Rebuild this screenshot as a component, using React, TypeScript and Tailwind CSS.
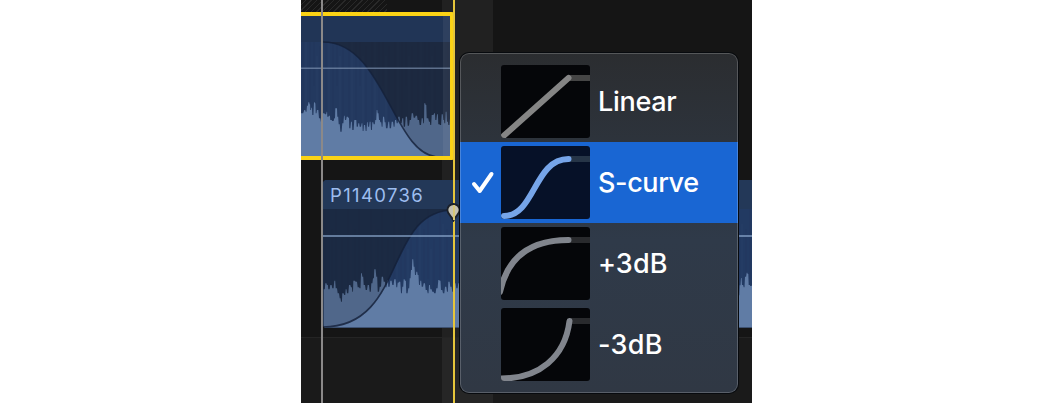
import React from "react";

const upperWave =
  "0,85 10,75 14,80 18,62 22,52 26,58 28,75 31,68 34,90 39,52 42,55 44,85 48,75 54,100 60,112 66,85 72,88 77,80 79,95 84,92 88,105 94,108 100,100 103,70 106,70 109,95 113,118 118,140 124,115 129,92 132,105 137,95 142,98 145,130 150,110 154,135 160,105 164,105 167,125 172,115 176,125 182,115 185,138 189,120 194,138 198,112 201,125 206,110 210,135 214,112 218,118 223,105 227,75 230,85 234,105 238,112 242,125 246,95 251,112 255,130 262,110 266,130 272,110 278,125 282,105 287,115 292,95 298,115 304,100 308,125 314,95 320,122 326,105 332,85 338,98 344,92 350,105 356,120 362,100 367,115 370,55 374,60 377,100 384,110 388,120 392,90 400,85 403,105 408,88 412,118 417,120 422,88 427,105 430,115 434,80 438,110 442,120 447,100 456,105";
const lowerWave =
  "2,118 7,100 12,105 16,118 22,105 28,115 34,92 38,115 44,130 50,145 54,155 58,130 64,135 68,118 72,130 78,105 84,112 88,125 91,92 98,95 104,112 110,115 114,70 118,80 122,105 128,120 134,105 140,125 145,100 150,85 154,58 160,80 164,125 170,110 176,80 182,95 188,112 192,90 196,110 202,92 208,105 214,88 220,112 224,98 228,95 234,130 238,110 242,88 246,92 250,130 256,115 260,85 264,60 268,28 272,50 276,75 280,65 284,75 288,105 292,92 296,110 302,100 308,120 314,130 318,105 322,118 328,125 334,130 340,115 346,90 350,92 354,120 360,130 366,110 372,125 376,95 382,110 388,125 394,100 400,115 406,100 1240,105 1247,136 1250,106 1254,84 1257,105 1262,112 1266,80 1271,68 1274,72 1277,105 1282,108 1287,106";

// Each sample reads as a narrow vertical bar.
function steps(samples: string, dx: number, dy: number, base: number) {
  const pts = samples.split(" ").map((p) => p.split(",").map(Number));
  let d = `M${dx + pts[0][0] / 3} ${base}`;
  pts.forEach(([x, y], i) => {
    const px = dx + x / 3;
    const next = i + 1 < pts.length ? dx + pts[i + 1][0] / 3 : px + 2;
    d += ` L${px.toFixed(1)} ${(dy + y / 3).toFixed(1)} L${(px + (next - px) * 0.65).toFixed(1)} ${(dy + y / 3).toFixed(1)}`;
    if (i + 1 === pts.length) d += ` L${next} ${base}`;
  });
  return d + "Z";
}

function Streaks({ id }: { id: string }) {
  return (
    <pattern id={id} width="23" height="150" patternUnits="userSpaceOnUse">
      <path d="M2 0V150M9 20V150M13 0V70M19 30V150" stroke="#17294a" strokeOpacity=".2" strokeWidth="1" />
      <path d="M5 15V150M16 40V150" stroke="#30507f" strokeOpacity=".14" strokeWidth="1" />
    </pattern>
  );
}

function UpperClip() {
  return (
    <div className="h-[148px] w-[153px] shrink-0 rounded-r-[3px] border-y-[4px] border-r-[4px] border-[#fbd315] bg-[#23395f]">
      <svg className="block h-[140px] w-[149px]" viewBox="0 0 149 140">
        <defs><Streaks id="streak-a" /></defs>
        <rect width="149" height="26" fill="#213556" />
        <rect y="26" width="149" height="114" fill="url(#streak-a)" />
        <path d="M22 26C84 26 92 141 138 141H149V26Z" fill="#19202d" fillOpacity=".5" />
        <path d={steps(upperWave, 0, 69, 141)} fill="#607ca5" />
        <path d="M22 26C84 26 92 141 138 141H149V26Z" fill="#19202d" fillOpacity=".22" />
        <path d="M22 26C84 26 92 141 138 141" fill="none" stroke="#14213a" strokeOpacity=".8" strokeWidth="1.6" />
        <path d="M0 52.3H149" stroke="#8396b5" strokeOpacity=".65" strokeWidth="1.6" />
        <path d="M142 0H149V141H142Z" fill="white" fillOpacity=".06" />
      </svg>
    </div>
  );
}

function LowerClip() {
  return (
    <div className="relative ml-[22px] flex h-[148px] flex-col overflow-hidden rounded-l-[4px] bg-[#223a62]">
      <div className="flex h-[29px] items-center bg-[#233858] pl-[7px] font-['Inter',sans-serif] text-[18.5px] leading-none tracking-[1.35px] text-[#9dbdef]">
        <span className="relative top-px">P1140736</span>
      </div>
      <svg className="block h-[119px] w-[429px]" viewBox="0 0 429 119">
        <defs><Streaks id="streak-b" /></defs>
        <rect width="429" height="119" fill="url(#streak-b)" />
        <path d="M0 119C84 119 61 1 131 1V0H0Z" fill="#19202d" fillOpacity=".48" />
        <path d={steps(lowerWave, 0, 41, 119)} fill="#607ca5" />
        <path d="M0 119C84 119 61 1 131 1V0H0Z" fill="#19202d" fillOpacity=".22" />
        <path d="M0 118C84 118 61 1 131 1" fill="none" stroke="#14213a" strokeOpacity=".8" strokeWidth="1.7" />
        <path d="M0 27H429" stroke="#8fabd1" strokeOpacity=".85" strokeWidth="1.6" />
        <path d="M0 118.5H429" stroke="#26364f" strokeOpacity=".6" />
      </svg>
    </div>
  );
}

const curves = [
  { label: "Linear", d: "M3 70.5L67.5 13", selected: false, width: "tracking-[-0.3px]" },
  { label: "S-curve", d: "M3 70C34 70 33 13 67.5 13", selected: true, width: "tracking-[-0.4px]" },
  { label: "+3dB", d: "M-1 65C6 32 27 13 67.5 13", selected: false, width: "tracking-[0.1px]" },
  { label: "-3dB", d: "M-1 70.5C38 71 64 49 68.5 13", selected: false, width: "tracking-[0.3px]" },
];

function FadeMenu() {
  return (
    <div className="absolute left-[159px] top-[53px] flex h-[340px] w-[278px] flex-col overflow-hidden rounded-[9px] bg-linear-to-b from-[#2b2d30] from-0% via-[#2f3a49] via-55% to-[#303844] py-[8px] shadow-[0_0_0_1px_#070a0e]">
      {curves.map((c) => (
        <div key={c.label} className={`flex h-[81px] shrink-0 items-center ${c.selected ? "bg-[#1966d3]" : ""}`}>
          <div className="flex w-[41px] justify-center pl-1">
            {c.selected && (
              <svg className="h-[24px] w-[26px]" viewBox="0 0 26 24" fill="none">
                <path d="M4 13L9.7 20L21.5 3" stroke="white" strokeWidth="4" strokeLinecap="round" strokeLinejoin="round" />
              </svg>
            )}
          </div>
          <svg className={`h-[73px] w-[89px] rounded-[3px] ${c.selected ? "bg-[#061128]" : "bg-[#050609]"}`} viewBox="0 0 89 73" fill="none">
            <path d="M68 13H89" stroke={c.selected ? "#263547" : c.label === "Linear" ? "#454545" : "#292a2d"} strokeWidth="6" />
            <path d={c.d} stroke={c.selected ? "#76a5e9" : c.label === "Linear" ? "#858585" : "#81858d"} strokeWidth="6" strokeLinecap="round" />
          </svg>
          <span className={`pl-[8px] font-['Inter',sans-serif] text-[27px] font-medium leading-none text-white ${c.width}`}>{c.label}</span>
        </div>
      ))}
      <div className="pointer-events-none absolute inset-0 rounded-[9px] border border-white/20" />
    </div>
  );
}

export default function App() {
  return (
    <main className="flex h-[403px] w-[1053px] justify-center bg-white">
      <section className="relative flex h-[403px] w-[451px] flex-col overflow-hidden bg-[#151515]">
        <div className="absolute left-[141px] top-0 h-full w-[51px] bg-[#212121]" />
        <div className="relative flex h-[12px] shrink-0">
          <div className="w-[86px] bg-[repeating-linear-gradient(135deg,#151515_0px,#151515_3px,#292929_3px,#292929_4px)]" />
        </div>
        <div className="relative flex h-[168px] shrink-0 items-start"><UpperClip /></div>
        <div className="relative h-[157px] shrink-0"><LowerClip /></div>
        <div className="relative h-[66px] shrink-0 border-t border-[#242424] bg-white/[0.025]" />
        <div className="absolute left-[20px] top-0 h-full w-[2px] bg-[#8b8989]" />
        <div className="absolute left-[152px] top-0 h-full w-[2px] bg-[#e5c53b]" />
        <svg className="absolute left-[145px] top-[202px] h-[20px] w-[15px]" viewBox="0 0 15 20">
          <path d="M7.5 2C4.1 2 1.4 4.7 1.4 8C1.4 12 5 13.5 7.5 18.5C10 13.5 13.6 12 13.6 8C13.6 4.7 10.9 2 7.5 2Z" fill="#c5c1b1" stroke="#1b2029" strokeWidth="1.8" />
          <path d="M8 3V18" stroke="#d7c675" strokeWidth="2" />
        </svg>
        <FadeMenu />
      </section>
    </main>
  );
}
